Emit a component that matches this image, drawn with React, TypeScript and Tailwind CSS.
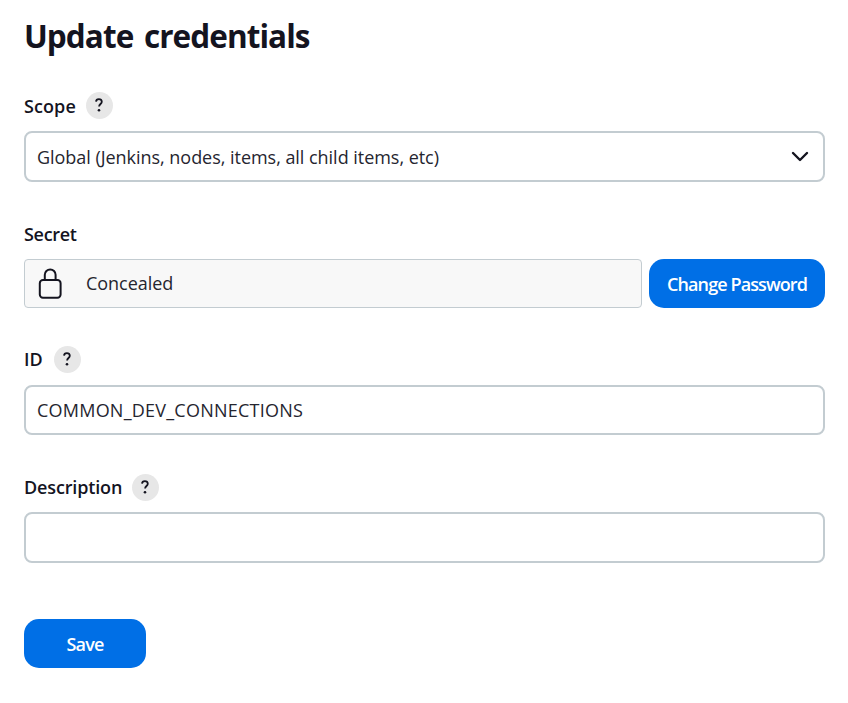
import type { ReactNode } from 'react';

function Help() {
  return (
    <button
      type="button"
      aria-label="Help"
      className="flex size-[27px] shrink-0 items-center justify-center rounded-full bg-[#e7e7e7] pb-px pr-px text-[#14141f]"
    >
      <svg width="8" height="14" viewBox="0 0 8 14" fill="none">
        <path
          d="M1 3.6C1.1 1.9 2.3 1.1 3.9 1.1c1.7 0 2.9 1 2.9 2.6 0 2.2-2.7 2.4-2.7 4.8"
          stroke="currentColor"
          strokeWidth="1.8"
        />
        <circle cx="4" cy="12.2" r="1.3" fill="currentColor" />
      </svg>
    </button>
  );
}

function Label({ children }: { children: ReactNode }) {
  return <div className="flex h-[27px] items-center text-[18px] font-semibold leading-[27px]">{children}</div>;
}

export default function App() {
  return (
    <main className="flex h-[703px] w-[848px] flex-col bg-white pl-6 pr-[23px] pt-4 font-['Open_Sans','Noto_Sans',sans-serif] text-[#14141f]">
      <h1 className="h-10 whitespace-nowrap text-[31.5px] font-bold leading-10">
        <span className="tracking-[-0.95px] [word-spacing:3.5px]">Update credentials</span>
      </h1>

      <section className="mt-9">
        <Label>
          <span className="mr-2.5 w-[52px] whitespace-nowrap pt-0.5 tracking-[0.1px]">Scope</span>
          <Help />
        </Label>
        <div className="mt-3 flex h-[51px] items-center justify-between rounded-lg border-2 border-[#c3ccd1] pl-[11px] pr-[14px]">
          <span className="whitespace-nowrap pt-0.5 text-[18px] tracking-[-0.035px] text-[#25252f]">
            Global (Jenkins, nodes, items, all child items, etc)
          </span>
          <svg width="18" height="12" viewBox="0 0 18 12" fill="none">
            <path d="M2 2l7 7 7-7" stroke="#14141f" strokeWidth="2.4" strokeLinecap="round" strokeLinejoin="round" />
          </svg>
        </div>
      </section>

      <section className="mt-[39px]">
        <Label>
          <span className="whitespace-nowrap tracking-[-0.3px]">Secret</span>
        </Label>
        <div className="mt-[11px] flex gap-[7px]">
          <div className="flex h-[49px] flex-1 items-center rounded border border-[#c3ccd1] bg-[#f8f8f8] pl-[13px]">
            <svg width="24" height="32" viewBox="0 0 24 32" fill="none" stroke="#14141f" strokeWidth="2">
              <rect x="1.8" y="12" width="20.8" height="17.8" rx="3.2" />
              <path d="M6.8 12V6.8a5.4 5.4 0 0 1 10.8 0V12" />
            </svg>
            <span className="ml-6 whitespace-nowrap text-[18px] tracking-[-0.05px] text-[#25252f]">Concealed</span>
          </div>
          <button
            type="button"
            className="flex h-[49px] w-[176px] items-center justify-center whitespace-nowrap rounded-[15px] bg-[#006fe6] pt-0.5 text-[18px] font-semibold tracking-[-0.9px] text-white"
          >
            Change Password
          </button>
        </div>
      </section>

      <section className="mt-[38px]">
        <Label>
          <span className="mr-2.5 w-5 whitespace-nowrap">ID</span>
          <Help />
        </Label>
        <div className="mt-3 flex h-[50px] items-center rounded-lg border-2 border-[#c3ccd1] pl-[11px]">
          <span className="whitespace-nowrap text-[18px] tracking-[0.23px] text-[#25252f]">COMMON_DEV_CONNECTIONS</span>
        </div>
      </section>

      <section className="mt-[39px]">
        <Label>
          <span className="mr-2.5 w-[98.4px] whitespace-nowrap tracking-[-0.15px]">Description</span>
          <Help />
        </Label>
        <input
          aria-label="Description"
          className="mt-[11px] block h-[51px] w-full rounded-lg border-2 border-[#c3ccd1] bg-white px-[11px] text-[18px] outline-none"
        />
      </section>

      <button
        type="button"
        className="mt-14 flex h-[49px] w-[122px] items-center justify-center rounded-[15px] bg-[#006fe6] pt-0.5 text-[18px] font-semibold tracking-[-0.8px] text-white"
      >
        Save
      </button>
    </main>
  );
}
